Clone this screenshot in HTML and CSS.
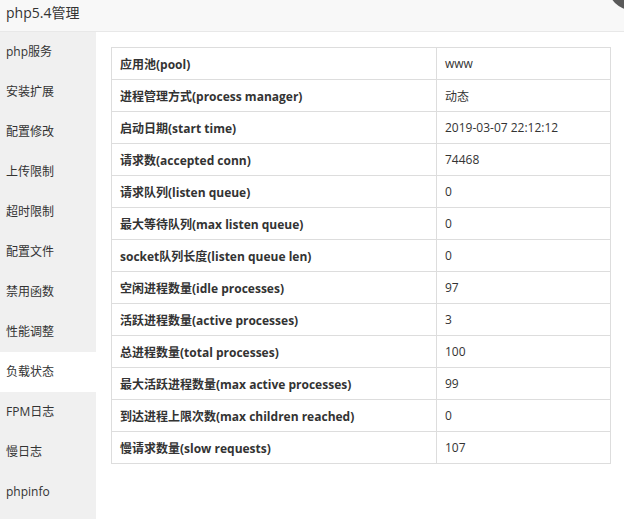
FILE: index.html
```html
<!DOCTYPE html>
<html lang="zh">
<head>
<meta charset="utf-8">
<link rel="stylesheet" href="styles.css">
</head>
<body>
<div class="layer">
  <div class="title">php5.4管理</div>
  <span class="close"></span>
  <div class="main">
    <ul class="menu">
      <li>php服务</li>
      <li>安装扩展</li>
      <li>配置修改</li>
      <li>上传限制</li>
      <li>超时限制</li>
      <li>配置文件</li>
      <li>禁用函数</li>
      <li>性能调整</li>
      <li class="on">负载状态</li>
      <li>FPM日志</li>
      <li>慢日志</li>
      <li>phpinfo</li>
      <li class="fill"></li>
    </ul>
    <div class="content">
      <table class="status">
        <tr><th>应用池(pool)</th><td>www</td></tr>
        <tr><th>进程管理方式(process manager)</th><td>动态</td></tr>
        <tr><th>启动日期(start time)</th><td>2019-03-07 22:12:12</td></tr>
        <tr><th>请求数(accepted conn)</th><td>74468</td></tr>
        <tr><th>请求队列(listen queue)</th><td>0</td></tr>
        <tr><th>最大等待队列(max listen queue)</th><td>0</td></tr>
        <tr><th>socket队列长度(listen queue len)</th><td>0</td></tr>
        <tr><th>空闲进程数量(idle processes)</th><td>97</td></tr>
        <tr><th>活跃进程数量(active processes)</th><td>3</td></tr>
        <tr><th>总进程数量(total processes)</th><td>100</td></tr>
        <tr><th>最大活跃进程数量(max active processes)</th><td>99</td></tr>
        <tr><th>到达进程上限次数(max children reached)</th><td>0</td></tr>
        <tr><th>慢请求数量(slow requests)</th><td>107</td></tr>
      </table>
    </div>
  </div>
</div>
</body>
</html>
```
FILE: styles.css
```css
* { box-sizing: border-box; }
html, body { margin: 0; padding: 0; background: #fff; }
body {
  font-family: "Open Sans", "Noto Sans CJK SC", sans-serif;
  font-size: 12px;
  color: #333;
  overflow: hidden;
  height: 519px;
}
.layer { position: relative; height: 519px; display: flex; flex-direction: column; overflow: hidden; }
.title {
  height: 32px;
  line-height: 26px;
  padding-left: 6px;
  font-size: 14px;
  color: #333;
  background: #f8f8f8;
  border-bottom: 1px solid #e8e8e8;
  flex: none;
}
.close {
  position: absolute;
  right: -32px;
  top: -38px;
  width: 48px;
  height: 48px;
  border-radius: 50%;
  background: #5a5a5a;
}
.main { display: flex; flex: 1; min-height: 0; }
.menu {
  list-style: none;
  margin: 0;
  padding: 0;
  width: 96px;
  flex: none;
  background: #f0f0f0;
  display: flex;
  flex-direction: column;
}
.menu li {
  height: 40px;
  line-height: 40px;
  padding-left: 6px;
  color: #333;
  white-space: nowrap;
}
.menu li.on { background: #fff; }
.menu li.fill { flex: 1; }
.content { flex: 1; padding: 15px 13px 0 15px; }
.status {
  width: 100%;
  border-collapse: collapse;
}
.status th, .status td {
  border: 1px solid #ddd;
  height: 32px;
  padding: 0 8px;
  text-align: left;
  font-size: 12px;
  color: #333;
}
.status th { width: 325px; font-weight: bold; }
```
